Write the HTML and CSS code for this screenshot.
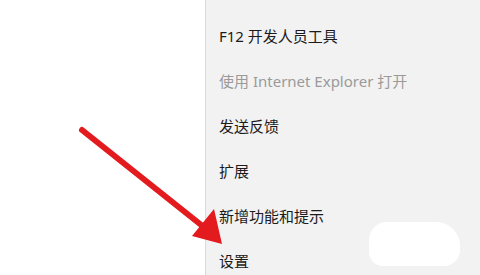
FILE: index.html
```html
<!DOCTYPE html>
<html lang="zh-CN">
<head>
    <meta charset="UTF-8">
    <title>菜单</title>
    <link rel="stylesheet" href="styles.css">
</head>
<body>
<div class="page">
    <div class="blank"></div>
    <ul class="menu">
        <li class="menu-item">F12 开发人员工具</li>
        <li class="menu-item disabled">使用 Internet Explorer 打开</li>
        <li class="menu-item">发送反馈</li>
        <li class="menu-item">扩展</li>
        <li class="menu-item">新增功能和提示</li>
        <li class="menu-item">设置</li>
    </ul>

    <div class="smudge"></div>

    <svg class="arrow" width="480" height="275" viewBox="0 0 480 275">
        <line x1="82" y1="130" x2="205" y2="228" stroke="#e31b1f" stroke-width="6" stroke-linecap="round"/>
        <polygon points="222,244 192,236 214,209" fill="#e31b1f"/>
    </svg>
</div>
</body>
</html>
```

FILE: styles.css
```css
body {
    margin: 0;
    background-color: #fff;
    font-family: "Noto Sans", "Noto Sans CJK SC", sans-serif;
    overflow: hidden;
}
.page {
    position: relative;
    display: flex;
    width: 480px;
    height: 275px;
    overflow: hidden;
}
.blank {
    width: 205px;
    background-color: #fff;
}
.menu {
    flex: 1;
    margin: 0;
    padding: 13px 0 0 0;
    list-style: none;
    background-color: #f2f2f2;
    border-left: 1px solid #dadada;
    display: flex;
    flex-direction: column;
}
.menu-item {
    flex-shrink: 0;
    height: 45px;
    display: flex;
    align-items: center;
    padding-left: 13px;
    font-size: 15px;
    color: #1b1b1b;
    white-space: nowrap;
}
.menu-item.disabled {
    color: #9a9a9a;
}
.smudge {
    position: absolute;
    left: 369px;
    top: 222px;
    width: 91px;
    height: 44px;
    background-color: #fff;
    border-radius: 18px 24px 16px 14px;
}
.arrow {
    position: absolute;
    left: 0;
    top: 0;
}
```
